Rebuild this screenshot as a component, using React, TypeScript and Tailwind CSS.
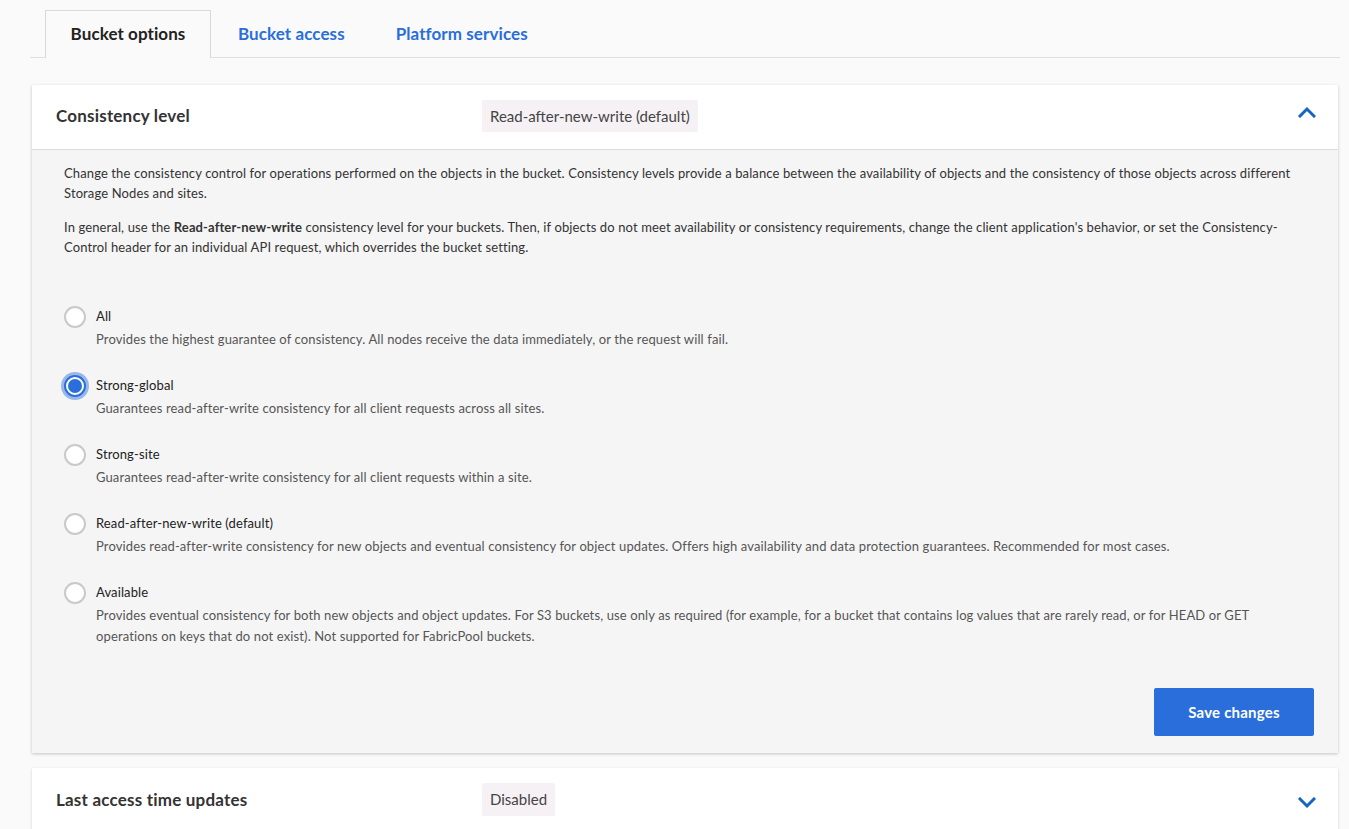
import React from "react";

const font = { fontFamily: "Lato, 'Liberation Sans', sans-serif" };

function ChevronUp() {
  return (
    <svg width="18" height="12" viewBox="0 0 18 12" fill="none">
      <path d="M2 10 L9 3 L16 10" stroke="#1565c0" strokeWidth="3" strokeLinecap="square" />
    </svg>
  );
}
function ChevronDown() {
  return (
    <svg width="18" height="12" viewBox="0 0 18 12" fill="none">
      <path d="M2 2 L9 9 L16 2" stroke="#1565c0" strokeWidth="3" strokeLinecap="square" />
    </svg>
  );
}

const options = [
  { label: "All", desc: "Provides the highest guarantee of consistency. All nodes receive the data immediately, or the request will fail." },
  { label: "Strong-global", desc: "Guarantees read-after-write consistency for all client requests across all sites.", checked: true },
  { label: "Strong-site", desc: "Guarantees read-after-write consistency for all client requests within a site." },
  { label: "Read-after-new-write (default)", desc: "Provides read-after-write consistency for new objects and eventual consistency for object updates. Offers high availability and data protection guarantees. Recommended for most cases." },
  { label: "Available", desc: "Provides eventual consistency for both new objects and object updates. For S3 buckets, use only as required (for example, for a bucket that contains log values that are rarely read, or for HEAD or GET operations on keys that do not exist). Not supported for FabricPool buckets." },
];

function Radio({ checked }: { checked?: boolean }) {
  if (checked) {
    return (
      <span className="flex h-[22px] w-[22px] shrink-0 items-center justify-center rounded-full border-2 border-[#2a6edb] bg-white shadow-[0_0_0_3px_rgba(42,110,219,0.45)]">
        <span className="block h-[14px] w-[14px] rounded-full bg-[#2a6edb]" />
      </span>
    );
  }
  return <span className="block h-[22px] w-[22px] shrink-0 rounded-full border-2 border-[#c9c9c9] bg-white" />;
}

export default function App() {
  return (
    <div className="min-h-[829px] bg-[#fafafa] pl-[30px] pr-[9px] pt-[10px] text-[#333]" style={font}>
      <div className="flex border-b border-[#e3dde1] pl-[15px] tracking-[0.08px]">
        <div className="-mb-px flex h-[48px] w-[166px] items-center justify-center border border-b-0 border-[#d9d9d9] bg-[#fafafa] pb-[1px] text-[17px] font-bold text-[#222]">
          Bucket options
        </div>
        <div className="flex h-[47px] items-center px-[27px] text-[17px] font-bold text-[#2a6edb]">Bucket access</div>
        <div className="flex h-[47px] items-center px-[24px] text-[17px] font-bold text-[#2a6edb]">Platform services</div>
      </div>

      <div className="mx-[2px] mt-[27px] bg-white shadow-[0_1px_3px_rgba(0,0,0,0.22)]">
        <div className="flex h-[65px] items-center border-b border-[#dcdcdc] pb-[2px] pl-[24px] pr-[22px]">
          <div className="w-[426px] text-[17px] font-bold tracking-[0.2px] text-[#333]">Consistency level</div>
          <div className="rounded-[2px] bg-[#f6f1f5] px-[8px] py-[5px] text-[15px] text-[#444]">Read-after-new-write (default)</div>
          <div className="mb-[8px] ml-auto"><ChevronUp /></div>
        </div>
        <div className="bg-[#f5f5f5] px-[32px] pb-[17px] pt-[13px] text-[13px] leading-[20px] tracking-[0.12px]">
          <p>
            Change the consistency control for operations performed on the objects in the bucket. Consistency levels provide a balance between the availability of objects and the consistency of those objects across different Storage Nodes and sites.
          </p>
          <p className="mt-[14px]">
            In general, use the <b>Read-after-new-write</b> consistency level for your buckets. Then, if objects do not meet availability or consistency requirements, change the client application's behavior, or set the Consistency-Control header for an individual API request, which overrides the bucket setting.
          </p>
          <div className="mt-[49px] flex flex-col gap-[25px]">
            {options.map((o) => (
              <div key={o.label} className="flex gap-[10px]">
                <div><Radio checked={o.checked} /></div>
                <div>
                  <div className="text-[13px] leading-[20px] text-[#222]">{o.label}</div>
                  <div className="mt-[3px] text-[13px] leading-[21px] text-[#555]">{o.desc}</div>
                </div>
              </div>
            ))}
          </div>
          <div className="mt-[41px] flex justify-end">
            <button className="-mr-[8px] h-[48px] w-[160px] rounded-[2px] bg-[#2a6edb] text-[15px] font-bold tracking-[0.2px] text-white">Save changes</button>
          </div>
        </div>
      </div>

      <div className="mx-[2px] mt-[15px] bg-white shadow-[0_1px_3px_rgba(0,0,0,0.15)]">
        <div className="flex h-[65px] items-center pb-[2px] pl-[24px] pr-[22px]">
          <div className="w-[426px] text-[17px] font-bold tracking-[0.2px] text-[#333]">Last access time updates</div>
          <div className="rounded-[2px] bg-[#f6f1f5] px-[8px] py-[5px] text-[15px] text-[#444]">Disabled</div>
          <div className="ml-auto mt-[6px]"><ChevronDown /></div>
        </div>
      </div>
    </div>
  );
}
